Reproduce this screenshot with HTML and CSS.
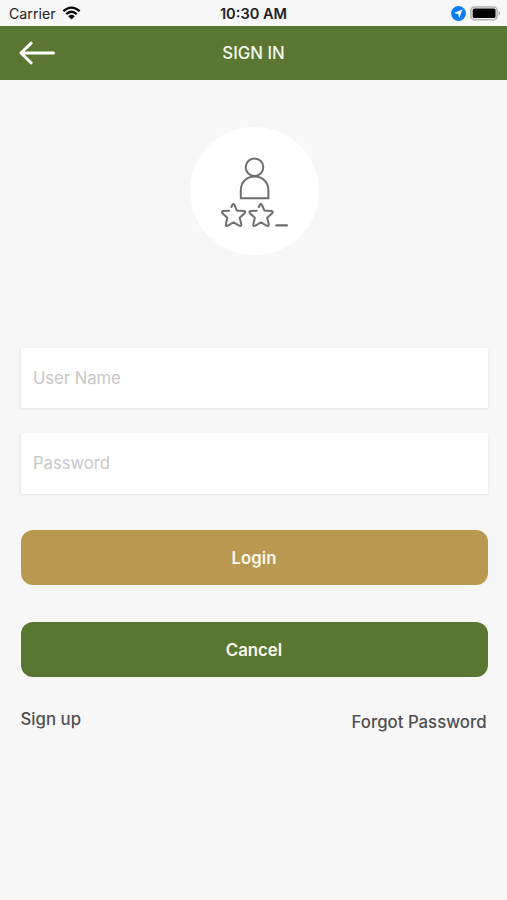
FILE: index.html
```html
<!DOCTYPE html>
<html lang="en">
<head>
<meta charset="utf-8">
<title>Sign in</title>
<link rel="stylesheet" href="styles.css">
</head>
<body>
<div class="screen">
  <div class="status">
    <div class="status-left">
      <span class="carrier">Carrier</span>
      <svg class="wifi" width="19" height="14" viewBox="0 0 20 14">
        <g fill="none" stroke="#080808" stroke-width="2.5">
          <path d="M1.4 5.1Q10 -2.4 18.6 5.1"/>
          <path d="M4.5 8.2Q10 3.4 15.5 8.2"/>
        </g>
        <path d="M6.6 10.4Q10 7.5 13.4 10.4L10 13.8Z" fill="#080808"/>
      </svg>
    </div>
    <span class="clock">10:30 AM</span>
    <div class="status-right">
      <svg width="15" height="15" viewBox="0 0 15 15">
        <circle cx="7.5" cy="7.5" r="7.4" fill="#087cf8"/>
        <path d="M11.7 3.2L8.2 11.9L7.2 7.9L3 7.1Z" fill="#fff"/>
      </svg>
      <svg width="31" height="15" viewBox="0 0 31 15">
        <rect x=".9" y=".9" width="26.2" height="12.8" rx="3.6" fill="#f4f4f4" stroke="#b2b2b2" stroke-width="1.5"/>
        <rect x="2.7" y="2.6" width="22.8" height="9.4" rx="1.6" fill="#000"/>
        <path d="M28.6 4.8Q31.6 7.3 28.6 9.8Z" fill="#a9a9a9"/>
      </svg>
    </div>
  </div>
  <header class="bar">
    <svg class="back" width="38" height="26" viewBox="0 0 38 26">
      <path d="M35.5 13H3M13.2 3.2L3 13L13.2 22.8" fill="none" stroke="#fff" stroke-width="3" stroke-linecap="round" stroke-linejoin="round"/>
    </svg>
    <h1 class="title">SIGN IN</h1>
  </header>
  <main class="content">
    <div class="avatar">
      <svg width="129" height="128" viewBox="190 127 129 128">
        <g fill="none" stroke="#6e6e6e" stroke-width="2" stroke-linejoin="round" stroke-linecap="round">
          <circle cx="254.5" cy="167.3" r="8.8"/>
          <path d="M240.8 198.2V190.5C240.8 171.8 268.4 171.8 268.4 190.5V198.2Z" stroke-linejoin="miter"/>
          <path id="star" d="M231.4 207L232.3 204.9Q233.4 202.9 234.5 205L236.8 210.4L243.9 211.1Q246.2 211.6 244.6 213.2L239.7 217.8L241.3 224.3Q241.4 226.8 239.2 225.7L233.5 222.4L227.9 225.7Q225.5 226.8 225.9 224.3L227.3 217.8L222.4 213.2Q221 211.5 223.2 211.1L229.2 210.7"/>
          <use href="#star" x="27.5"/>
          <path d="M276.5 225.4H286.8" stroke-width="2.4"/>
        </g>
      </svg>
    </div>
    <form class="form">
      <input class="field" type="text" placeholder="User Name">
      <input class="field" type="password" placeholder="Password">
      <button class="button login" type="button">Login</button>
      <button class="button cancel" type="button">Cancel</button>
    </form>
    <nav class="links">
      <a class="signup">Sign up</a>
      <a class="forgot">Forgot Password</a>
    </nav>
  </main>
</div>
</body>
</html>
```
FILE: styles.css
```css
* { box-sizing: border-box; }
body {
  margin: 0;
  background: #f7f7f7;
  font-family: Inter, Roboto, sans-serif;
}
.screen { height: 900px; overflow: hidden; }
.status {
  height: 25.5px;
  padding: 2px 6px 0 9px;
  display: grid;
  grid-template-columns: 1fr auto 1fr;
  align-items: center;
  color: #202020;
}
.status-left { display: flex; align-items: center; gap: 6px; }
.carrier { font-size: 14.2px; line-height: 20px; }
.wifi { margin-top: -2px; }
.clock { margin-right: 3px; font-size: 14.6px; line-height: 20px; font-weight: 600; }
.status-right { display: flex; justify-content: flex-end; gap: 4px; }
.bar {
  height: 54.5px;
  padding: 0 18px;
  background: #5a7731;
  display: grid;
  grid-template-columns: 1fr auto 1fr;
  align-items: center;
}
.title { margin: 0; font-size: 16.8px; font-weight: 500; color: #f3f8ec; line-height: 22px; }
.content { padding: 47px 19.5px 0 20.5px; }
.avatar {
  width: 129px;
  height: 128px;
  margin: 0 auto;
  border-radius: 50%;
  background: #fff;
}
.avatar svg { display: block; }
.form { display: flex; flex-direction: column; margin-top: 92.5px; }
.field {
  height: 60.5px;
  width: 467px;
  margin: 0 0 25px;
  padding: 0 12.5px;
  border: 0;
  border-radius: 1px;
  background: #fff;
  box-shadow: -.5px 1px 3px rgba(0, 0, 0, .08);
  font: 400 16.6px Inter, Roboto, sans-serif;
}
.field::placeholder { color: #c7c7c7; opacity: 1; }
.button {
  height: 55px;
  padding: 0;
  border: 0;
  border-radius: 12px;
  font: 600 16.8px Inter, Roboto, sans-serif;
  color: #faf7ec;
}
.login { margin-top: 11.5px; background: #b99850; }
.cancel { margin-top: 37px; background: #5a7731; }
.links {
  display: flex;
  justify-content: space-between;
  padding: 31px 1px 0 0;
  font-size: 16.8px;
  font-weight: 500;
  line-height: 22px;
  color: #505050;
}
.forgot { margin-top: 3px; }
```
